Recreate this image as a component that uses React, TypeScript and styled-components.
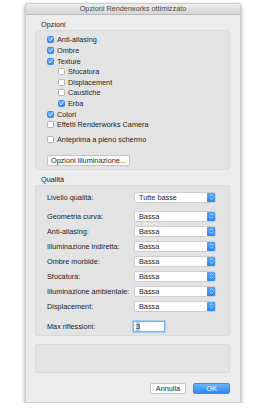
import React from "react";
import styled, { createGlobalStyle } from "styled-components";

const Global = createGlobalStyle`
  html, body { margin: 0; padding: 0; background: #ffffff; }
  body { font-family: "Liberation Sans", Arial, sans-serif; }
`;

const Page = styled.div`
  padding: 3px 0 0 25px;
`;

const Window = styled.div`
  width: 216px;
  height: 400px;
  box-sizing: border-box;
  background: #ececec;
  border: 1px solid #cfcfcf;
  border-radius: 3px 3px 0 0;
  box-shadow: 0 2px 4px rgba(0, 0, 0, 0.35), 0 0 1px rgba(0, 0, 0, 0.2);
  display: flex;
  flex-direction: column;
  overflow: hidden;
`;

const TitleBar = styled.div`
  height: 10px;
  flex: none;
  background: linear-gradient(#ececec, #d6d6d6);
  border-bottom: 1px solid #b9b9b9;
  font-size: 7.3px;
  line-height: 10px;
  color: #4a4a4a;
  text-align: center;
`;

const Body = styled.div`
  padding: 0 10px 0 9px;
  display: flex;
  flex-direction: column;
`;

const SectionLabel = styled.div<{ $top: number }>`
  font-size: 7.3px;
  line-height: 9px;
  color: #222;
  padding-left: 6px;
  margin-top: ${(p) => p.$top}px;
  margin-bottom: 1px;
`;

const Group = styled.div<{ $pt: number; $pb: number; $h?: number; $mt?: number }>`
  background: #e3e3e3;
  border: 1px solid #dadada;
  border-radius: 2px;
  margin-top: ${(p) => p.$mt ?? 0}px;
  padding: ${(p) => p.$pt}px 0 ${(p) => p.$pb}px 11px;
  display: flex;
  flex-direction: column;
  ${(p) => (p.$h ? `height: ${p.$h}px; box-sizing: border-box;` : "")}
`;

const CheckRow = styled.div<{ $indent?: boolean; $mt?: number }>`
  height: 10.6px;
  display: flex;
  align-items: center;
  gap: 3px;
  padding-left: ${(p) => (p.$indent ? 11 : 0)}px;
  margin-top: ${(p) => p.$mt ?? 0}px;
  font-size: 7.3px;
  color: #1e1e1e;
`;

const Box = styled.span<{ $on?: boolean }>`
  width: 7px;
  height: 7px;
  box-sizing: border-box;
  border-radius: 1.5px;
  flex: none;
  display: flex;
  align-items: center;
  justify-content: center;
  background: ${(p) => (p.$on ? "linear-gradient(#6fb1fb, #2b86f5)" : "#ffffff")};
  border: 1px solid ${(p) => (p.$on ? "#3a86e8" : "#b2b2b2")};
`;

const PushButton = styled.div`
  align-self: flex-start;
  margin-top: 9.7px;
  height: 11px;
  width: 83px;
  box-sizing: border-box;
  background: #ffffff;
  border: 1px solid #c3c3c3;
  border-radius: 2px;
  font-size: 7.3px;
  line-height: 9px;
  color: #1e1e1e;
  text-align: center;
`;

const FormRow = styled.div<{ $mt: number }>`
  display: flex;
  align-items: center;
  height: 11px;
  margin-top: ${(p) => p.$mt}px;
`;

const FieldLabel = styled.div`
  width: 87px;
  font-size: 7.3px;
  color: #1e1e1e;
  white-space: nowrap;
`;

const Select = styled.div`
  width: 82px;
  height: 11px;
  box-sizing: border-box;
  background: #ffffff;
  border: 1px solid #cdcdcd;
  border-radius: 2px;
  display: flex;
  align-items: center;
  font-size: 7.3px;
  color: #1e1e1e;
  overflow: hidden;
`;

const SelectText = styled.span`
  flex: 1;
  padding-left: 4px;
`;

const Stepper = styled.span`
  width: 9px;
  height: 11px;
  margin-right: -1px;
  flex: none;
  background: linear-gradient(#5aa4fa, #2b85f4);
  border-radius: 0 2px 2px 0;
  display: flex;
  align-items: center;
  justify-content: center;
`;

const NumberInput = styled.div`
  margin-left: -1px;
  width: 32px;
  height: 11px;
  box-sizing: border-box;
  background: #ffffff;
  border: 1px solid #7fb1ea;
  box-shadow: 0 0 0 1px #a8cbf3;
  display: flex;
  align-items: center;
  padding-left: 2px;
  font-size: 7.3px;
  color: #1e1e1e;
`;

const Sel = styled.span`
  background: #b3d3f9;
`;

const Footer = styled.div`
  display: flex;
  justify-content: flex-end;
  gap: 7px;
  margin-top: 10px;
`;

const DialogButton = styled.div<{ $primary?: boolean }>`
  width: ${(p) => (p.$primary ? 37 : 36)}px;
  height: 11px;
  box-sizing: border-box;
  border-radius: 2px;
  font-size: 7.3px;
  line-height: 10px;
  text-align: center;
  color: ${(p) => (p.$primary ? "#ffffff" : "#1e1e1e")};
  background: ${(p) => (p.$primary ? "linear-gradient(#6cb4fb, #2a88f6)" : "#ffffff")};
  border: 1px solid ${(p) => (p.$primary ? "#3a8af0" : "#c3c3c3")};
`;

const Check = () => (
  <svg width="5" height="5" viewBox="0 0 10 10">
    <path d="M2 5.5 L4.2 8 L8.2 2" fill="none" stroke="#fff" strokeWidth="1.8" strokeLinecap="round" strokeLinejoin="round" />
  </svg>
);

const Arrows = () => (
  <svg width="5" height="8" viewBox="0 0 10 16">
    <path d="M2.5 6 L5 3.5 L7.5 6 M2.5 10 L5 12.5 L7.5 10" fill="none" stroke="#fff" strokeWidth="1.4" strokeLinecap="round" strokeLinejoin="round" />
  </svg>
);

const CB = ({ on, label, indent, mt }: { on?: boolean; label: string; indent?: boolean; mt?: number }) => (
  <CheckRow $indent={indent} $mt={mt}>
    <Box $on={on}>{on && <Check />}</Box>
    <span>{label}</span>
  </CheckRow>
);

const quality = [
  "Geometria curva:",
  "Anti-aliasing:",
  "Illuminazione indiretta:",
  "Ombre morbide:",
  "Sfocatura:",
  "Illuminazione ambientale:",
  "Displacement:",
];

export default function App() {
  return (
    <Page>
      <Global />
      <Window>
        <TitleBar>Opzioni Renderworks ottimizzato</TitleBar>
        <Body>
          <SectionLabel $top={5}>Opzioni</SectionLabel>
          <Group $pt={3.7} $pb={3}>
            <CB on label="Anti-aliasing" />
            <CB on label="Ombre" />
            <CB on label="Texture" />
            <CB indent label="Sfocatura" />
            <CB indent label="Displacement" />
            <CB indent label="Caustiche" />
            <CB indent on label="Erba" />
            <CB on label="Colori" />
            <CB label="Effetti Renderworks Camera" />
            <CB label="Anteprima a pieno schermo" mt={4.6} />
            <PushButton>Opzioni illuminazione...</PushButton>
          </Group>
          <SectionLabel $top={5.5}>Qualità</SectionLabel>
          <Group $pt={5.5} $pb={3.5}>
            <FormRow $mt={0}>
              <FieldLabel>Livello qualità:</FieldLabel>
              <Select>
                <SelectText>Tutte basse</SelectText>
                <Stepper><Arrows /></Stepper>
              </Select>
            </FormRow>
            {quality.map((q, i) => (
              <FormRow key={q} $mt={i === 0 ? 7.7 : 4}>
                <FieldLabel>{q}</FieldLabel>
                <Select>
                  <SelectText>Bassa</SelectText>
                  <Stepper><Arrows /></Stepper>
                </Select>
              </FormRow>
            ))}
            <FormRow $mt={9.3}>
              <FieldLabel>Max riflessioni:</FieldLabel>
              <NumberInput><Sel>3</Sel></NumberInput>
            </FormRow>
          </Group>
          <Group $pt={0} $pb={0} $h={29} $mt={8} />
          <Footer>
            <DialogButton>Annulla</DialogButton>
            <DialogButton $primary>OK</DialogButton>
          </Footer>
        </Body>
      </Window>
    </Page>
  );
}
